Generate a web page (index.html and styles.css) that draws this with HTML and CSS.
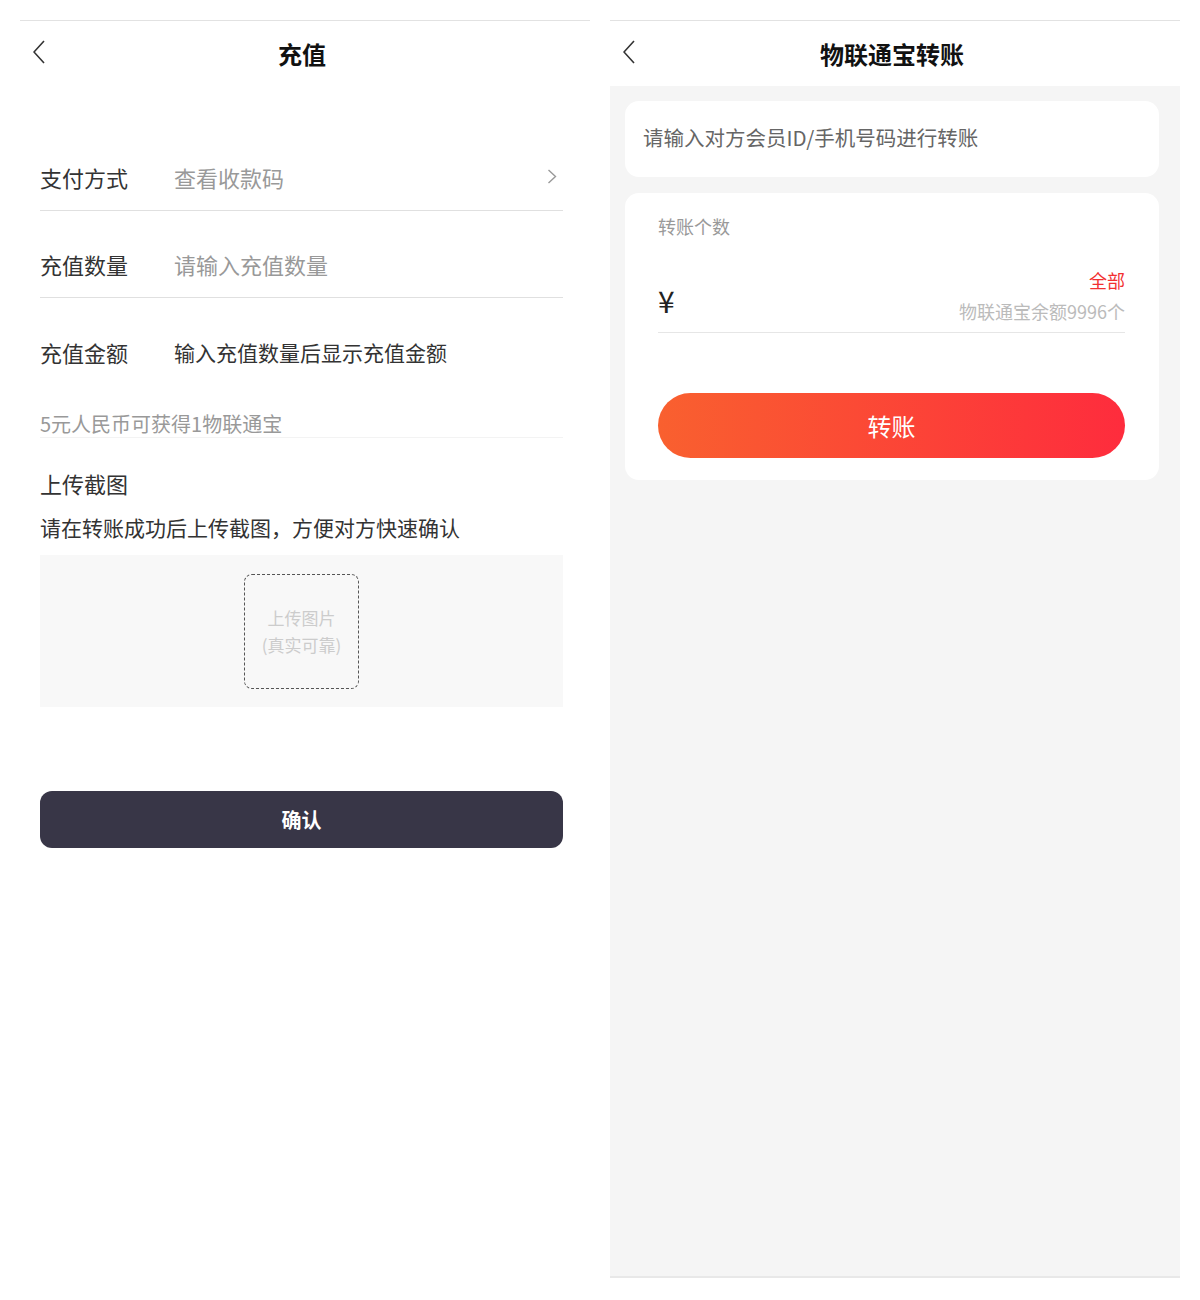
FILE: index.html
```html
<!DOCTYPE html>
<html>
<head>
    <title>充值 / 物联通宝转账</title>
    <meta charset="utf-8">
    <meta name="viewport" content="width=device-width, initial-scale=1">
    <link rel="stylesheet" href="styles.css">
</head>
<body>
    <main class="screens">
        <section class="screen">
            <header class="nav">
                <svg class="back" width="12" height="24" viewBox="0 0 12 24"><polyline points="11,1 1,12 11,23" fill="none" stroke="#333" stroke-width="1.6"/></svg>
                <h1>充值</h1>
            </header>
            <div class="form">
                <div class="row line">
                    <span class="label">支付方式</span>
                    <span class="value muted">查看收款码</span>
                    <svg class="chevron" width="10" height="15" viewBox="0 0 10 15"><polyline points="1.5,1 8.5,7.5 1.5,14" fill="none" stroke="#999" stroke-width="1.4"/></svg>
                </div>
                <div class="row line">
                    <span class="label">充值数量</span>
                    <span class="value muted">请输入充值数量</span>
                </div>
                <div class="row">
                    <span class="label">充值金额</span>
                    <span class="value small">输入充值数量后显示充值金额</span>
                </div>
                <p class="note">5元人民币可获得1物联通宝</p>
                <h2 class="upload-title">上传截图</h2>
                <p class="upload-tip">请在转账成功后上传截图，方便对方快速确认</p>
                <div class="upload-area">
                    <div class="upload-box">上传图片<br>(真实可靠)</div>
                </div>
                <button class="confirm">确认</button>
            </div>
        </section>

        <section class="screen">
            <header class="nav">
                <svg class="back" width="12" height="24" viewBox="0 0 12 24"><polyline points="11,1 1,12 11,23" fill="none" stroke="#333" stroke-width="1.6"/></svg>
                <h1>物联通宝转账</h1>
            </header>
            <div class="transfer">
                <div class="card member">请输入对方会员ID/手机号码进行转账</div>
                <div class="card amount">
                    <div class="amount-label">转账个数</div>
                    <div class="amount-row">
                        <span class="yen">¥</span>
                        <div class="balance">
                            <span class="all">全部</span>
                            <span class="left">物联通宝余额9996个</span>
                        </div>
                    </div>
                    <button class="transfer-btn">转账</button>
                </div>
            </div>
        </section>
    </main>
</body>
</html>
```

FILE: styles.css
```css
body {
    margin: 0;
    background-color: #fff;
    color: #333;
    font-family: "Noto Sans CJK SC", "Liberation Sans", sans-serif;
}

.screens {
    display: flex;
    gap: 20px;
    padding: 20px 20px 0;
}

.screen {
    width: 570px;
    border-top: 1px solid #e2e2e2;
}

.nav {
    display: grid;
    grid-template-columns: 1fr auto 1fr;
    align-items: center;
    height: 65px;
    padding-right: 6px;
}

.nav .back {
    margin-left: 13px;
    margin-top: -3px;
}

.nav h1 {
    margin: 0;
    font-size: 24px;
    font-weight: bold;
    color: #111;
}

/* recharge */
.form {
    padding: 38px 27px 0 20px;
}

.row {
    display: flex;
    align-items: center;
    height: 87px;
    padding-top: 20px;
    box-sizing: border-box;
}

.row.line {
    border-bottom: 1px solid #e0e0e0;
}

.label {
    width: 134px;
    font-size: 22px;
    color: #333;
}

.value {
    flex: 1;
    font-size: 22px;
}

.value.muted {
    color: #999;
}

.value.small {
    font-size: 21px;
    color: #333;
}

.chevron {
    margin-right: 6px;
    margin-top: -2px;
}

.note {
    margin: 26px 0 0;
    font-size: 20px;
    line-height: 26px;
    color: #999;
    border-bottom: 1px solid #f3f3f3;
}

.upload-title {
    margin: 31px 0 0;
    font-size: 22px;
    line-height: 28px;
    font-weight: normal;
}

.upload-tip {
    margin: 16px 0 0;
    font-size: 21px;
    line-height: 28px;
}

.upload-area {
    display: flex;
    justify-content: center;
    align-items: center;
    height: 152px;
    margin-top: 14px;
    background-color: #f8f8f8;
}

.upload-box {
    display: flex;
    align-items: center;
    justify-content: center;
    width: 115px;
    height: 115px;
    box-sizing: border-box;
    border: 1px dashed #555;
    border-radius: 8px;
    font-size: 17px;
    line-height: 27px;
    color: #ccc;
    text-align: center;
}

.confirm {
    display: block;
    width: 100%;
    height: 57px;
    margin-top: 84px;
    border: none;
    border-radius: 12px;
    background-color: #383647;
    color: #fff;
    font-family: inherit;
    font-size: 20px;
    font-weight: bold;
}

/* transfer */
.transfer {
    height: 1192px;
    padding: 15px 21px 0 15px;
    background-color: #f5f5f5;
    border-bottom: 2px solid #e8e8e8;
    box-sizing: border-box;
}

.card {
    background-color: #fff;
    border-radius: 14px;
}

.member {
    height: 76px;
    display: flex;
    align-items: center;
    padding-left: 18px;
    padding-bottom: 4px;
    box-sizing: border-box;
    font-size: 20.5px;
    color: #666;
}

.amount {
    margin-top: 16px;
    padding: 20px 34px 22px 33px;
}

.amount-label {
    font-size: 18px;
    line-height: 26px;
    color: #999;
}

.amount-row {
    display: flex;
    justify-content: space-between;
    align-items: flex-end;
    margin-top: 28px;
    padding-bottom: 8px;
    border-bottom: 1px solid #e6e6e6;
}

.yen {
    font-size: 30px;
    line-height: 36px;
    color: #222;
    margin-bottom: 6px;
}

.balance {
    display: flex;
    flex-direction: column;
    align-items: flex-end;
    gap: 5px;
    font-size: 18px;
    line-height: 26px;
}

.all {
    color: #f23030;
}

.left {
    color: #bbb;
}

.transfer-btn {
    display: block;
    width: 100%;
    height: 65px;
    margin-top: 60px;
    border: none;
    border-radius: 33px;
    background: linear-gradient(90deg, #f9602f, #fe2c3d);
    color: #fff;
    font-family: inherit;
    font-size: 24px;
}
```
